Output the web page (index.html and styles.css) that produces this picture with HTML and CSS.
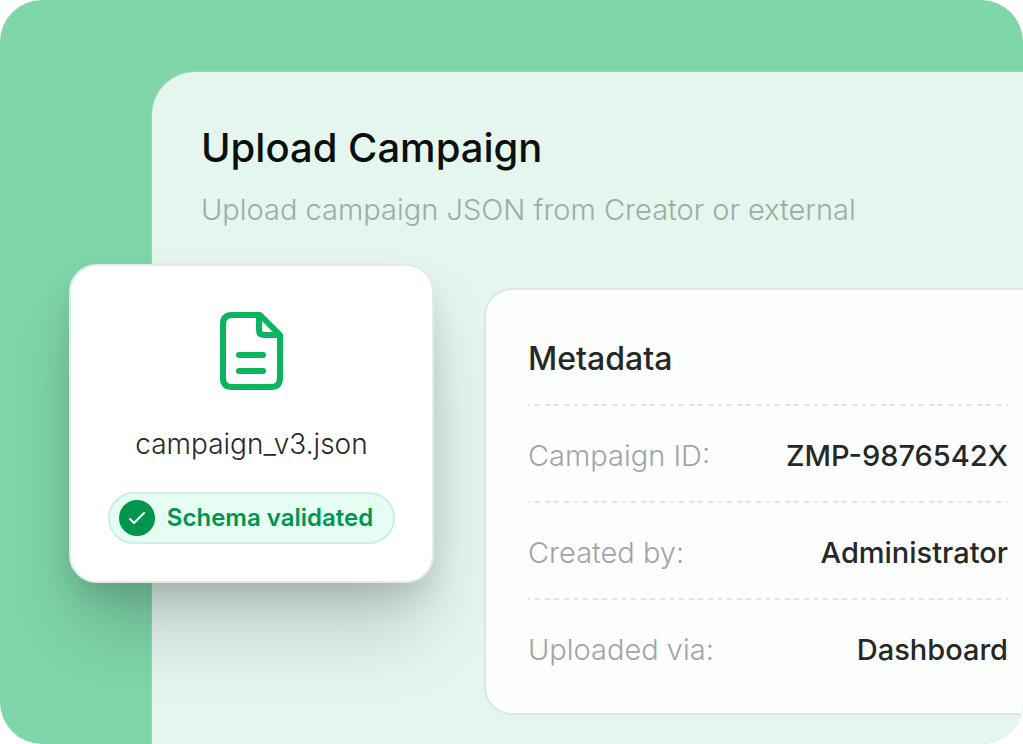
FILE: index.html
```html
<!DOCTYPE html>
<html lang="en">
<head>
    <meta charset="UTF-8">
    <meta name="viewport" content="width=device-width, initial-scale=1.0">
    <title>Upload Campaign</title>
    <link rel="stylesheet" href="styles.css">
</head>
<body>
    <main class="stage">
        <section class="panel">
            <header class="panel-header">
                <h1 class="panel-title">Upload Campaign</h1>
                <p class="panel-subtitle">Upload campaign JSON from Creator or external</p>
            </header>

            <!-- Metadata card -->
            <div class="metadata">
                <h2 class="metadata-title">Metadata</h2>
                <dl class="metadata-list">
                    <div class="metadata-row">
                        <dt>Campaign ID:</dt>
                        <dd>ZMP-9876542X</dd>
                    </div>
                    <div class="metadata-row">
                        <dt>Created by:</dt>
                        <dd>Administrator</dd>
                    </div>
                    <div class="metadata-row">
                        <dt>Uploaded via:</dt>
                        <dd>Dashboard</dd>
                    </div>
                </dl>
            </div>
        </section>

        <!-- Uploaded file, floats over the panel edge -->
        <div class="file-card">
            <svg class="file-icon" viewBox="0 0 64 80" fill="none" stroke="currentColor" stroke-width="6" stroke-linecap="round" stroke-linejoin="round" aria-hidden="true">
                <path d="M12 4H40L60 24V67Q60 76 51 76H12Q3 76 3 67V13Q3 4 12 4Z"/>
                <path d="M39 5V19Q39 24 44 24H59"/>
                <path d="M19 44H43M19 60H43"/>
            </svg>
            <p class="file-name">campaign_v3.json</p>
            <div class="badge">
                <svg class="badge-icon" viewBox="0 0 36 36" fill="none" aria-hidden="true">
                    <circle cx="18" cy="18" r="18" fill="#00954d"/>
                    <path d="M11 19L15 23L25 13" stroke="#fff" stroke-width="2" stroke-linecap="round" stroke-linejoin="round"/>
                </svg>
                <span>Schema validated</span>
            </div>
        </div>
    </main>
</body>
</html>
```
FILE: styles.css
```css
:root {
    --green: #7fd6ab;
    --mint: #e4f6ee;
    --line: #e0e6e3;
    --text: #262827;
    --muted: #a2a4a6;
}

* {
    box-sizing: border-box;
}

body {
    margin: 0;
    background: #fff;
    color: var(--text);
    font-family: Inter, "Liberation Sans", sans-serif;
    font-size: 29px;
    line-height: 40px;
}

h1,
h2,
p,
dl,
dd {
    margin: 0;
}

.stage {
    position: relative;
    display: flex;
    min-height: 100vh;
    padding: 71px 0 0 151px;
    background: var(--green);
    border-radius: 42px;
    overflow: hidden;
}

.panel {
    flex: 1;
    min-width: 0;
    padding: 50px 0 28px 49px;
    background: var(--mint);
    border: 1px solid #9bd3b5;
    border-width: 1px 0 0 1px;
    border-radius: 44px 0 0 0;
}

.panel-title {
    color: #0b0f0d;
    font-size: 40px;
    font-weight: 500;
    line-height: 52px;
}

.panel-subtitle {
    margin-top: 16px;
    color: #a0aaa6;
    font-weight: 300;
}

.metadata {
    margin: 58px 0 0 283px;
    padding: 49px 15px 18px 42px;
    background: #fcfefd;
    border: 2px solid var(--line);
    border-right: 0;
    border-radius: 28px 0 0 28px;
}

.metadata-title {
    padding-bottom: 25px;
    font-size: 32px;
    font-weight: 500;
}

.metadata-row {
    display: flex;
    justify-content: space-between;
    padding: 32px 0 25px;
    background: repeating-linear-gradient(90deg, var(--line) 0 0.5%, transparent 0.5% 1.5%, var(--line) 1.5% 2%) top / 100% 2px no-repeat;
}

.metadata-row dt {
    color: var(--muted);
    font-weight: 300;
}

.metadata-row dd {
    font-weight: 500;
}

.file-card {
    position: absolute;
    top: 264px;
    left: 69px;
    display: flex;
    flex-direction: column;
    align-items: center;
    width: 365px;
    padding: 45px 36px 37px;
    background: #fff;
    border: 2px solid #e4ebe7;
    border-radius: 28px;
    box-shadow: 0 16px 32px -4px rgba(0, 0, 0, 0.14), 0 52px 80px -8px rgba(0, 0, 0, 0.18);
}

.file-icon {
    width: 64px;
    height: 80px;
    color: #0bb45f;
}

.file-name {
    margin-top: 33px;
    font-size: 28px;
    font-weight: 300;
}

.badge {
    display: flex;
    align-items: center;
    gap: 12px;
    margin-top: 28px;
    padding: 6px 20px 6px 9px;
    background: #e6fdf3;
    border: 2px solid #c9f0e0;
    border-radius: 28px;
    color: #00954d;
    font-size: 24px;
    font-weight: 600;
    line-height: 36px;
    white-space: nowrap;
}

.badge-icon {
    width: 36px;
    height: 36px;
}
```
